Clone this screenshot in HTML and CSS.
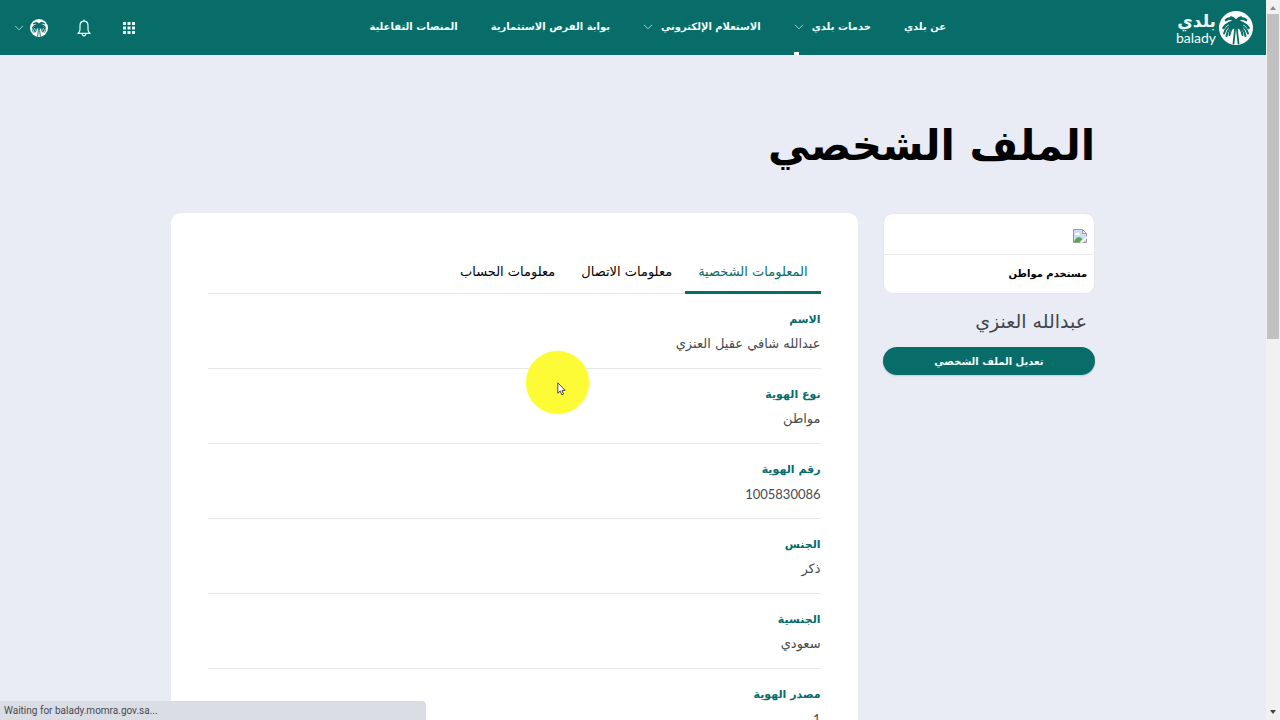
FILE: index.html
```html
<!DOCTYPE html>
<html lang="ar" dir="rtl">
<head>
<meta charset="utf-8">
<meta name="viewport" content="width=device-width, initial-scale=1">
<title>الملف الشخصي</title>
<link rel="stylesheet" href="styles.css">
</head>
<body>
<svg class="defs" aria-hidden="true">
  <symbol id="palm" viewBox="0 0 34 34">
    <circle cx="17" cy="17" r="17" fill="#fff"/>
    <g fill="none" stroke="#086d69" stroke-linecap="round">
      <path stroke-width="2.6" d="M17 12C14 7.500 10 6.500 7 9M17 12c3-4.500 7-5.500 10-3M17 13c-5-2-10-.5-12.500 4M17 13c5-2 10-.5 12.500 4M17 12C16.500 9 14.500 7 12 6.500M17 12c.5-3 2.500-5 5-5.500"/>
      <path stroke-width="2" d="M17 13C11 13 6 17 5 22.500M17 13c6 0 11 4 12 9.500M17 13c-5 1.500-8.500 6-9.500 12M17 13c5 1.500 8.500 6 9.500 12M17 13c-3.500 3-6 7-6.500 11M17 13c3.500 3 6 7 6.500 11"/>
      <path stroke-width="1.800" d="M16.500 14c-.5 5-1 10-2 18.500M17.500 14c.5 5 1 10 2 18.500"/>
    </g>
    <path fill="#086d69" d="M9 11l8-2.500L25 11l-2 6-3 1-3-1-3 1-3-1z"/>
  </symbol>
  <symbol id="chevron" viewBox="0 0 10 6">
    <path d="M1 .8l4 4 4-4" fill="none" stroke="#9fd0cc" stroke-width="1"/>
  </symbol>
</svg>
<div class="window">
  <div class="page">
    <header class="topbar">
      <a class="brand" href="#">
        <svg class="brand-mark"><use href="#palm"/></svg>
        <span class="brand-text"><span class="brand-ar">بلدي</span><span class="brand-en" lang="en" dir="ltr">balady</span></span>
      </a>
      <nav class="nav">
        <a href="#">عن بلدي</a>
        <a class="current" href="#">خدمات بلدي<svg class="chevron"><use href="#chevron"/></svg></a>
        <a href="#">الاستعلام الإلكتروني<svg class="chevron"><use href="#chevron"/></svg></a>
        <a href="#">بوابة الفرص الاستثمارية</a>
        <a href="#">المنصات التفاعلية</a>
      </nav>
      <div class="tools">
        <button class="tool" type="button" aria-label="التطبيقات">
          <svg class="apps" viewBox="0 0 12 12" fill="#e8fffb"><path d="M0 0h3v3H0zM4.500 0h3v3h-3zM9 0h3v3H9zM0 4.500h3v3H0zM4.500 4.500h3v3h-3zM9 4.500h3v3H9zM0 9h3v3H0zM4.500 9h3v3h-3zM9 9h3v3H9z"/></svg>
        </button>
        <button class="tool" type="button" aria-label="الإشعارات">
          <svg class="bell" viewBox="0 0 14 18" fill="none" stroke="#e8fffb" stroke-width="1.200" stroke-linejoin="round"><path d="M7 2.200C4.400 2.200 3 4.200 3 6.600v4.200c0 1.700-.8 2.700-2.200 3.600h12.400c-1.400-.9-2.200-1.900-2.200-3.600V6.600c0-2.400-1.400-4.400-4-4.400zM7 2.200V.6M5.200 14.600c0 1.300.8 2.200 1.800 2.200s1.800-.9 1.800-2.200"/></svg>
        </button>
        <button class="account" type="button" aria-label="الحساب">
          <svg class="avatar"><use href="#palm"/></svg>
          <svg class="chevron"><use href="#chevron"/></svg>
        </button>
      </div>
    </header>
    <main class="content">
      <h1 class="title">الملف الشخصي</h1>
      <div class="columns">
        <aside class="side">
          <div class="user-card">
            <div class="user-photo">
              <svg class="broken" viewBox="0 0 14 14" role="img" aria-label="صورة المستخدم">
                <path d="M.5.5h9l4 4v9H.5z" fill="#cfdcf5" stroke="#9a9a9a"/>
                <path d="M9.500.5v4h4z" fill="#fff" stroke="#9a9a9a"/>
                <path d="M2 5.500c0-1 1-1.700 2-1.300.6-1 2.300-.7 2.300.6.8.1.8 1.200 0 1.200H2.500z" fill="#fff"/>
                <path d="M1 13c1-4 4-5.500 6.500-4.500L9.500 10l-3 3z" fill="#55a844"/>
                <path d="M7 14l7-7v2l-5 5z" fill="#fff"/>
              </svg>
            </div>
            <div class="user-role">مستخدم مواطن</div>
          </div>
          <div class="user-name">عبدالله العنزي</div>
          <button class="edit" type="button">تعديل الملف الشخصي</button>
        </aside>
        <section class="panel">
          <div class="tabs" role="tablist">
            <button class="tab active" type="button" role="tab" aria-selected="true">المعلومات الشخصية</button>
            <button class="tab" type="button" role="tab" aria-selected="false">معلومات الاتصال</button>
            <button class="tab" type="button" role="tab" aria-selected="false">معلومات الحساب</button>
          </div>
          <dl class="info">
            <div class="row"><dt>الاسم</dt><dd>عبدالله شافي عقيل العنزي</dd></div>
            <div class="row"><dt>نوع الهوية</dt><dd>مواطن</dd></div>
            <div class="row"><dt>رقم الهوية</dt><dd class="number">1005830086</dd></div>
            <div class="row"><dt>الجنس</dt><dd>ذكر</dd></div>
            <div class="row"><dt>الجنسية</dt><dd>سعودي</dd></div>
            <div class="row"><dt>مصدر الهوية</dt><dd class="number">1</dd></div>
          </dl>
        </section>
      </div>
    </main>
  </div>
  <div class="scrollbar" aria-hidden="true">
    <svg class="arrow" viewBox="0 0 6 4"><path d="M0 4l3-4 3 4z" fill="#8a8a8a"/></svg>
    <div class="track"><div class="thumb"></div></div>
    <svg class="arrow" viewBox="0 0 6 4"><path d="M0 0l3 4 3-4z" fill="#444"/></svg>
  </div>
  <div class="status" lang="en" dir="ltr">Waiting for balady.momra.gov.sa...</div>
  <div class="pointer" aria-hidden="true">
    <svg class="cursor" viewBox="0 0 9 14"><path d="M.8.8v10.400l2.400-2.200 1.600 3.800 1.700-.7L5 8.400h3.200z" fill="#fff" stroke="#333" stroke-width=".9"/></svg>
  </div>
</div>
</body>
</html>
```

FILE: styles.css
```css
* { box-sizing: border-box; }

body {
  margin: 0;
  font-family: "DejaVu Sans", "Noto Sans", sans-serif;
  background: #e9ecf4;
  color: #000;
}

button { font: inherit; border: 0; background: none; padding: 0; cursor: pointer; }
a { color: inherit; text-decoration: none; }
svg { display: block; flex: none; }
.defs { position: absolute; width: 0; height: 0; }

.window { display: flex; direction: ltr; position: relative; height: 100vh; overflow: hidden; white-space: nowrap; }
.page { flex: 1; min-width: 0; direction: rtl; }

.topbar {
  display: flex;
  align-items: stretch;
  height: 55px;
  padding: 0 13px 0 14px;
  background: #086d69;
  color: #f0fffc;
}
.brand { display: flex; align-items: center; gap: 3px; width: 307px; }
.brand-mark { width: 34px; height: 34px; }
.brand-text { display: flex; flex-direction: column; width: 42px; }
.brand-ar { font-size: 17px; line-height: 20px; font-weight: 700; }
.brand-en { font-family: Lato, sans-serif; font-size: 14px; line-height: 14px; text-align: right; }

.nav { display: flex; gap: 33px; font-size: 10px; font-weight: 700; }
.nav a { display: flex; align-items: center; gap: 8px; position: relative; padding-bottom: 2px; }
.chevron { width: 10px; height: 6px; }
.current::after { content: ""; position: absolute; left: 0; bottom: 0; width: 5px; height: 3px; background: #fff; }

.tools { display: flex; align-items: center; gap: 27px; margin-right: auto; }
.tool { display: flex; justify-content: center; width: 18px; }
.apps { width: 12px; height: 12px; }
.bell { width: 14px; height: 18px; }
.account { display: flex; align-items: center; gap: 6px; }
.avatar { width: 18px; height: 18px; }

.content { width: 73%; max-width: 1140px; margin: 0 auto; padding-top: 52px; }
.title { margin: 0; font-size: 42px; line-height: 78px; font-weight: 700; }
.columns { display: flex; align-items: flex-start; gap: 25px; margin-top: 28px; }

.side { width: 23%; flex: none; }
.user-card { background: #fff; border: 1px solid #e6e8ee; border-radius: 10px; }
.user-photo { padding: 15px 7px 11px; border-bottom: 1px solid #e9e9ec; }
.broken { width: 14px; height: 14px; }
.user-role { padding: 8px 7px; font-size: 10px; line-height: 22px; font-weight: 700; }
.user-name { padding: 0 8px; margin-top: 10px; font-size: 19px; line-height: 34px; color: #41464d; }
.edit {
  display: block;
  width: 100%;
  height: 28px;
  margin-top: 9px;
  border-radius: 14px;
  background: #086d69;
  color: #f0fffc;
  font-size: 10px;
  font-weight: 700;
  box-shadow: 0 1px 2px #c3cbd2;
}

.panel { flex: 1; min-width: 0; min-height: 560px; padding: 39px 37px; background: #fff; border-radius: 10px; }
.tabs { display: flex; border-bottom: 1px solid #e5e7e9; }
.tab { height: 42px; padding: 0 13px; margin-bottom: -1px; border-bottom: 3px solid transparent; font-size: 13px; }
.active { color: #086d69; border-color: #086d69; }

.info { margin: 0; font-size: 13px; }
.row { padding: 14px 0 12px; border-bottom: 1px solid #e5e7e9; }
.row dt { font-size: 11px; line-height: 24px; font-weight: 700; color: #086d69; }
.row dd { margin: 0; line-height: 24px; color: #474b50; }
.row .number { font-family: Lato, sans-serif; }

.scrollbar { display: flex; flex-direction: column; align-items: center; width: 14px; padding: 6px 0; background: #f1f1f1; }
.arrow { width: 6px; height: 4px; }
.track { flex: 1; width: 12px; margin: 4px 0; }
.thumb { height: 47%; background: #c1c1c1; }

.status {
  position: absolute;
  left: 0;
  bottom: 0;
  width: 426px;
  padding: 0 4px;
  border-radius: 0 4px 0 0;
  background: #dbdde5;
  color: #474a50;
  font-family: Roboto, sans-serif;
  font-size: 10px;
  line-height: 19px;
}
.pointer {
  position: absolute;
  left: 526px;
  top: 351px;
  width: 63px;
  height: 63px;
  padding: 31px;
  border-radius: 50%;
  background: #fdfb35;
  box-shadow: 0 0 2px #fdfb90;
}
.cursor { width: 9px; height: 14px; }
```
